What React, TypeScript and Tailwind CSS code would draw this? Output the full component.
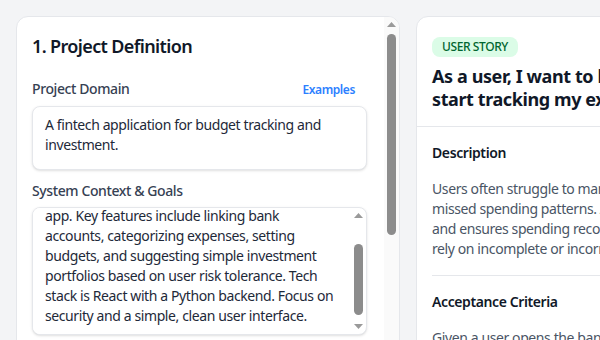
import React, { useEffect, useRef } from "react";

function Arrow({ down }: { down?: boolean }) {
  return (
    <div className="h-[15px] w-full flex items-center justify-center shrink-0">
      <svg width="9" height="5" viewBox="0 0 9 5">
        {down ? (
          <polygon points="0,0 9,0 4.5,5" fill="#9a9a9a" />
        ) : (
          <polygon points="4.5,0 9,5 0,5" fill="#9a9a9a" />
        )}
      </svg>
    </div>
  );
}

function Label({ children, extra }: { children: React.ReactNode; extra?: React.ReactNode }) {
  return (
    <div className="flex items-baseline justify-between mb-1.5">
      <span className="text-sm leading-5 font-medium text-gray-700">{children}</span>
      {extra}
    </div>
  );
}

const fieldCls =
  "block w-full resize-none rounded-lg border border-gray-200 bg-white px-3 py-2 text-sm leading-5 text-gray-800 shadow-sm outline-none";

export default function App() {
  const ctxRef = useRef<HTMLTextAreaElement>(null);
  useEffect(() => {
    const el = ctxRef.current;
    if (el) el.scrollTop = el.scrollHeight;
  }, []);

  return (
    <div
      className="w-[600px] h-[340px] overflow-hidden bg-gray-100 pt-4 pl-4 tracking-[-0.025em]"
      style={{ fontFamily: '"Noto Sans", "Open Sans", sans-serif' }}
    >
      <div className="flex gap-4 w-[820px]">
        {/* Left card */}
        <div className="w-[384px] h-[400px] shrink-0 flex overflow-hidden rounded-xl border border-gray-200 bg-white">
          <div className="flex-1 min-w-0 pl-[15px] pr-[17px] pt-[15px] pb-4">
            <h2 className="text-lg leading-7 font-semibold text-gray-900 mb-[19px] tracking-[-0.035em]">
              1. Project Definition
            </h2>

            <Label extra={<span className="px-3 text-xs leading-5 font-semibold text-blue-500">Examples</span>}>
              Project Domain
            </Label>
            <textarea
              className={fieldCls + " h-16"}
              defaultValue="A fintech application for budget tracking and investment."
            />

            <div className="mt-[11px]">
              <Label>System Context &amp; Goals</Label>
              <div className="flex h-32 overflow-hidden rounded-lg border border-gray-200 bg-white shadow-sm">
                <textarea
                  ref={ctxRef}
                  className="block flex-1 min-w-0 h-full resize-none overflow-hidden bg-white pl-3 pr-[13px] py-2 text-sm leading-5 text-gray-800 outline-none"
                  defaultValue="The goal is to build a modern personal finance app. Key features include linking bank accounts, categorizing expenses, setting budgets, and suggesting simple investment portfolios based on user risk tolerance. Tech stack is React with a Python backend. Focus on security and a simple, clean user interface."
                />
                <div className="w-[15px] shrink-0 flex flex-col items-center">
                  <Arrow />
                  <div className="mt-[21px] h-[71px] w-[9px] rounded-full bg-[#8c8c8c]" />
                  <div className="flex-1" />
                  <Arrow down />
                </div>
              </div>
            </div>

            <div className="mt-[11px]">
              <Label>Target Users</Label>
              <textarea
                className={fieldCls + " h-16"}
                defaultValue="Young professionals who want a simple way to manage money and start investing."
              />
            </div>

            <div className="mt-[11px]">
              <Label>Constraints</Label>
              <textarea
                className={fieldCls + " h-16"}
                defaultValue="Must comply with financial data regulations and support secure bank connections."
              />
            </div>
          </div>
          <div className="w-[15px] shrink-0 flex flex-col items-center bg-[#fafafa]">
            <Arrow />
            <div className="mt-[2px] h-[201px] w-[9px] rounded-full bg-[#8c8c8c]" />
            <div className="flex-1" />
            <Arrow down />
          </div>
        </div>

        {/* Right card */}
        <div className="w-[400px] shrink-0 rounded-xl border border-gray-200 bg-white overflow-hidden">
          <div className="px-[15px] pt-4 pb-4 border-b border-gray-200">
            <span className="inline-block rounded-lg bg-green-100 px-2.5 py-0.5 text-xs leading-4 font-medium text-green-800 uppercase">
              User Story
            </span>
            <h3 className="mt-2 text-lg leading-tight font-bold text-gray-900 whitespace-nowrap">
              As a user, I want to link my bank account so that I can
              <br />
              start tracking my expenses automatically.
            </h3>
          </div>
          <div className="px-[15px] pt-4">
            <div className="pb-4">
              <h4 className="text-sm leading-5 font-semibold text-gray-900 mb-4">Description</h4>
              <p className="text-sm leading-5 text-gray-600 whitespace-nowrap">
                Users often struggle to manually track their expenses, which leads to
                <br />
                missed spending patterns. Automatic bank linking saves time
                <br />
                and ensures spending records are always up to date, so users don't
                <br />
                rely on incomplete or incorrect manual entries.
              </p>
            </div>
            <div className="border-t border-gray-200 pt-4">
              <h4 className="text-sm leading-5 font-semibold text-gray-900 mb-4">Acceptance Criteria</h4>
              <p className="text-sm leading-5 text-gray-600 whitespace-nowrap">
                Given a user opens the bank linking screen, when they select a bank,
                <br />
                then they are redirected to a secure authentication page.
              </p>
            </div>
          </div>
        </div>
      </div>
    </div>
  );
}
